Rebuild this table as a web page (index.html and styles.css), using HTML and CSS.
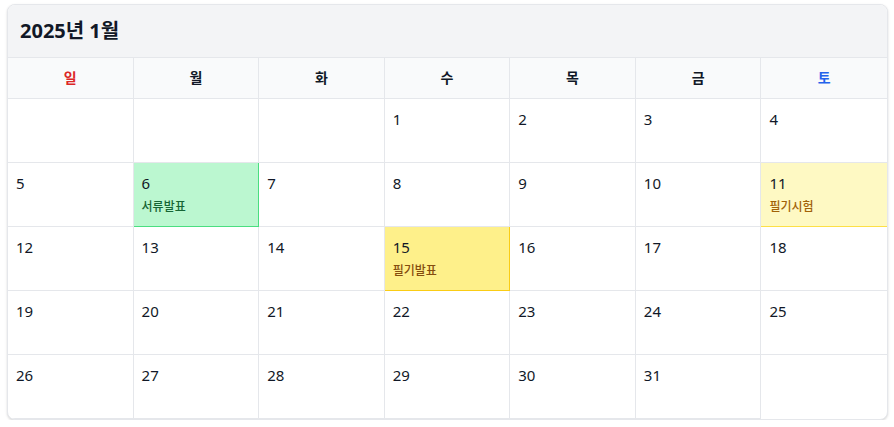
FILE: index.html
```html
<!DOCTYPE html>
<html lang="ko">
<head>
    <meta charset="UTF-8">
    <meta name="viewport" content="width=device-width, initial-scale=1.0">
    <title>2025년 1월</title>
    <link rel="stylesheet" href="styles.css">
</head>
<body>
    <div class="calendar">
        <div class="cal-header">2025년 1월</div>
        <div class="weekdays">
            <div class="wd sun">일</div>
            <div class="wd">월</div>
            <div class="wd">화</div>
            <div class="wd">수</div>
            <div class="wd">목</div>
            <div class="wd">금</div>
            <div class="wd sat">토</div>
        </div>
        <div class="days">
            <div class="day"></div>
            <div class="day"></div>
            <div class="day"></div>
            <div class="day"><span class="num">1</span></div>
            <div class="day"><span class="num">2</span></div>
            <div class="day"><span class="num">3</span></div>
            <div class="day"><span class="num">4</span></div>

            <div class="day"><span class="num">5</span></div>
            <div class="day green"><span class="num">6</span><div class="event">서류발표</div></div>
            <div class="day"><span class="num">7</span></div>
            <div class="day"><span class="num">8</span></div>
            <div class="day"><span class="num">9</span></div>
            <div class="day"><span class="num">10</span></div>
            <div class="day light-yellow"><span class="num">11</span><div class="event">필기시험</div></div>

            <div class="day"><span class="num">12</span></div>
            <div class="day"><span class="num">13</span></div>
            <div class="day"><span class="num">14</span></div>
            <div class="day yellow"><span class="num">15</span><div class="event">필기발표</div></div>
            <div class="day"><span class="num">16</span></div>
            <div class="day"><span class="num">17</span></div>
            <div class="day"><span class="num">18</span></div>

            <div class="day"><span class="num">19</span></div>
            <div class="day"><span class="num">20</span></div>
            <div class="day"><span class="num">21</span></div>
            <div class="day"><span class="num">22</span></div>
            <div class="day"><span class="num">23</span></div>
            <div class="day"><span class="num">24</span></div>
            <div class="day"><span class="num">25</span></div>

            <div class="day"><span class="num">26</span></div>
            <div class="day"><span class="num">27</span></div>
            <div class="day"><span class="num">28</span></div>
            <div class="day"><span class="num">29</span></div>
            <div class="day"><span class="num">30</span></div>
            <div class="day"><span class="num">31</span></div>
        </div>
    </div>
</body>
</html>
```

FILE: styles.css
```css
body {
    margin: 0;
    padding: 4px 6px 0 7px;
    font-family: "Noto Sans", "Noto Sans CJK KR", sans-serif;
    color: #111827;
    background: #fff;
}
.calendar {
    border: 1px solid #e5e7eb;
    border-radius: 8px;
    overflow: hidden;
    box-shadow: 0 1px 3px rgba(0,0,0,0.1), 0 1px 2px rgba(0,0,0,0.06);
    background: #fff;
}
.cal-header {
    background-color: #f3f4f6;
    padding: 12px;
    font-size: 20px;
    line-height: 28px;
    font-weight: 700;
    border-bottom: 1px solid #e5e7eb;
}
.weekdays {
    display: grid;
    grid-template-columns: repeat(7, 1fr);
    background-color: #f9fafb;
    border-bottom: 1px solid #e5e7eb;
}
.wd {
    height: 40px;
    line-height: 40px;
    text-align: center;
    font-size: 14px;
    font-weight: 700;
    border-right: 1px solid #e5e7eb;
}
.wd:last-child { border-right: none; }
.wd.sun { color: #dc2626; }
.wd.sat { color: #2563eb; }
.days {
    display: grid;
    grid-template-columns: repeat(7, 1fr);
}
.day {
    padding: 8px;
    height: 47px;
    border-right: 1px solid #e5e7eb;
    border-bottom: 1px solid #e5e7eb;
}
.day:nth-child(7n) { border-right: none; }
.num {
    display: block;
    font-size: 15px;
    line-height: 24px;
}
.event {
    margin-top: 4px;
    font-size: 12px;
    line-height: 16px;
    font-weight: 500;
}
.green {
    background-color: #bbf7d0;
    border-color: #4ade80;
}
.green .event { color: #166534; }
.yellow {
    background-color: #fef08a;
    border-color: #facc15;
}
.yellow .event { color: #854d0e; }
.light-yellow {
    background-color: #fef9c3;
    border-color: #fde047;
}
.light-yellow .event { color: #a16207; }
```
